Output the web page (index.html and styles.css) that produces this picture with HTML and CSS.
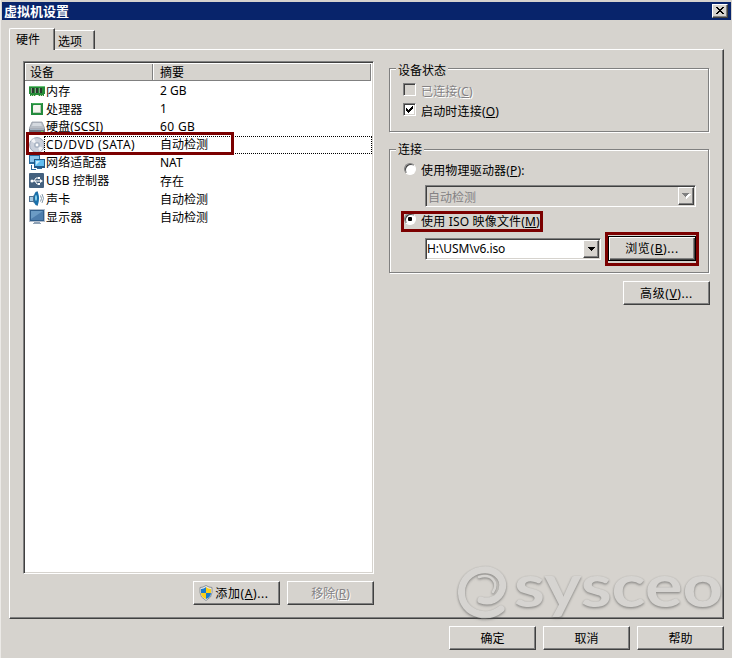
FILE: index.html
```html
<!DOCTYPE html>
<html lang="zh-CN">
<head>
<meta charset="utf-8">
<title>虚拟机设置</title>
<link rel="stylesheet" href="styles.css">
</head>
<body>
<div class="window">
  <header class="titlebar"><h1>虚拟机设置</h1>
    <button class="close" aria-label="关闭"><svg width="10" height="8" viewBox="0 0 10 8" shape-rendering="crispEdges"><path d="M1 0h2v1h1v1h2V1h1V0h2v1H8v1H7v1H6v1h1v1h1v1h1v1H7V6H6V5H4v1H3v1H1V6h1V5h1V4h1V3H3V2H2V1H1z"/></svg></button>
  </header>
  <nav class="tabs"><div class="tab active">硬件</div><div class="tab">选项</div></nav>
  <main class="panel">
    <section class="left">
      <div class="list">
        <div class="list-head"><span>设备</span><span>摘要</span></div>
        <div class="row"><svg class="icon" viewBox="0 0 16 16"><path fill="#258b38" d="M0 3h16v8h-1v2H9v-1H7v1H1v-2H0z"/><path stroke="#69c275" d="M0 3.5h16"/><path fill="#263c2b" d="M2 5h3v5H2zM6 5h3v5H6zM10 5h3v5h-3z"/><path stroke="#8a9a88" d="M2.5 5v5M6.5 5v5M10.5 5v5"/><path stroke="#c1dda8" d="M2 12.5h5M9 12.5h5" stroke-dasharray="1 1"/></svg><span class="name cn">内存</span><span>2 GB</span></div>
        <div class="row"><svg class="icon" viewBox="0 0 16 16"><path fill="#238b3e" d="M2 2h12v12H2z"/><path fill="#45ad59" d="M3 2h10v1H3z"/><rect x="4" y="4" width="8" height="8" rx="1" fill="#f3f4ee"/><path stroke="#b9cab8" d="M5 11.5h7M11.5 5v7"/></svg><span class="name cn">处理器</span><span>1</span></div>
        <div class="row"><svg class="icon" viewBox="0 0 16 16"><path fill="#b8bec6" stroke="#8b949e" stroke-width=".7" d="M3 3h10l3 7H0z"/><path fill="#d5dae0" d="M4 4h8l1 3H3z"/><path fill="#687480" d="M0 10h16v4H0z"/><path fill="#a7b4c2" d="M1 10h14v1H1z"/><path fill="#70c65c" d="M12 12h2v1h-2z"/></svg><span class="name">硬盘(SCSI)</span><span class="spaced">60 GB</span></div>
        <div class="row selected"><svg class="icon" viewBox="0 0 16 16"><circle cx="8" cy="8" r="7.4" fill="#cbd1dc" stroke="#9ba7b8"/><path fill="#f2f3f6" d="M8 8 2 4l3-3zM8 8l6 3-3 4z"/><circle cx="8" cy="8" r="3" fill="#aab5c5"/><circle cx="8" cy="8" r="1.4" fill="#fff"/></svg><span class="name wide">CD/DVD (SATA)</span><span>自动检测</span></div>
        <div class="row"><svg class="icon" viewBox="0 0 16 16"><path fill="#266b9f" d="M0 0h11v9H0z"/><path fill="#8bc5eb" d="M1 1h9v6H1z"/><path fill="#225987" d="M5 4h11v9H5z"/><path fill="#61bdf0" d="M6 5h9v6H6z"/><path fill="#c5edff" d="M7 6h4L7 10z"/><path fill="#286b9e" d="M8 13h5v1H8zM2 10h1v4h4v1H2z"/></svg><span class="name">网络适配器</span><span>NAT</span></div>
        <div class="row"><svg class="icon" viewBox="0 0 16 16"><rect x="0" y="0" width="15" height="15" rx="1" fill="#44617f"/><path d="M2 8h10M5 8l2-3h3M6 8l2 3h2" fill="none" stroke="#fff"/><circle cx="3" cy="8" r="1.5" fill="#fff"/><path fill="#fff" d="M11 6l3 2-3 2zM9 4h2v2H9zM9 10h2v2H9z"/></svg><span class="name">USB 控制器</span><span class="cn">存在</span></div>
        <div class="row"><svg class="icon" viewBox="0 0 16 16"><path fill="#4e7192" d="M0 5h4l5-5v15l-5-4H0z"/><path fill="#a5cae3" d="M1 6h3v4H1z"/><ellipse cx="7.5" cy="7.5" rx="2.5" ry="7" fill="#1870ab"/><ellipse cx="7" cy="7" rx="1" ry="3" fill="#8ed5ef"/><path d="M11.500 4.500q2 3 0 6M13 3q3 4 0 9" fill="none" stroke="#8398aa"/></svg><span class="name cn">声卡</span><span class="cn">自动检测</span></div>
        <div class="row"><svg class="icon" viewBox="0 0 16 16"><path fill="#b2becd" d="M0 0h16v13H0z"/><path fill="#315f8c" d="M1 1h14v11H1z"/><path fill="#4d7dac" d="M2 2h12v9H2z"/><path fill="#6b9bc4" d="M2 2h12L2 10z"/><path fill="#8fa2b6" d="M5 13h6v1h1v1H4v-1h1z"/></svg><span class="name cn">显示器</span><span class="cn">自动检测</span></div>
        <div class="mark mark-device"></div>
      </div>
      <div class="list-actions">
        <button class="btn spaced add"><svg class="shield" width="14" height="16" viewBox="0 0 14 16"><path d="M7 .5q3 2 6 2v5q0 5-6 8-6-3-6-8v-5q3 0 6-2z" fill="#eee" stroke="#8c9297"/><path fill="#197bcb" d="M7 2v6H2V4q3 0 5-2zm0 6h5q0 4-5 6z"/><path fill="#f9cf18" d="M7 2q2 2 5 2v4H7zM2 8h5v6Q2 12 2 8z"/></svg>添加(<u>A</u>)...</button>
        <button class="btn disabled">移除(<u>R</u>)</button>
      </div>
    </section>
    <section class="right">
      <fieldset class="group status"><div class="legend">设备状态</div>
        <div class="option disabled"><i class="check off"></i><span>已连接(<u>C</u>)</span></div>
        <div class="option"><i class="check"><svg width="7" height="7" viewBox="0 0 7 7" shape-rendering="crispEdges"><path d="M0 2h1v1h1v1h1V3h1V2h1V1h1V0h1v3H6v1H5v1H4v1H3v1H2V6H1V5H0z"/></svg></i><span>启动时连接(<u>O</u>)</span></div>
      </fieldset>
      <fieldset class="group connection"><div class="legend">连接</div>
        <div class="option physical"><i class="radio"></i><span>使用物理驱动器(<u>P</u>):</span></div>
        <div class="combo inactive"><span>自动检测</span><i class="arrow"><svg width="9" height="6" viewBox="0 0 9 6" shape-rendering="crispEdges"><path fill="#fff" d="M1 1h8v1H8v1H7v1H6v1H5v1H4V5z"/><path fill="#808080" d="M0 0h7v1H6v1H5v1H4v1H3V3H2V2H1V1H0z"/></svg></i></div>
        <div class="option iso"><i class="radio on"></i><span>使用 ISO 映像文件(<u>M</u>)</span><div class="mark mark-iso"></div></div>
        <div class="file"><div class="combo path"><span>H:\USM\v6.iso</span><i class="arrow"><svg width="7" height="4" viewBox="0 0 7 4" shape-rendering="crispEdges"><path d="M0 0h7v1H6v1H5v1H4v1H3V3H2V2H1V1H0z"/></svg></i></div>
        <div class="browse"><button class="btn default spaced">浏览(<u>B</u>)...</button></div></div>
      </fieldset>
      <button class="btn advanced spaced">高级(<u>V</u>)...</button>
    </section>
  </main>
  <footer><button class="btn">确定</button><button class="btn">取消</button><button class="btn">帮助</button></footer>
  <svg class="watermark" width="284" height="70" viewBox="0 0 284 70">
    <g class="swirl"><path d="M52 50Q42 58 30 55C8 50 6 20 28 12C44 7 57 18 53 31C50 40 41 44 32 41"/><path class="fine" d="M30 18C43 14 50 24 44 33"/></g>
    <text x="65" y="48" textLength="209" lengthAdjust="spacingAndGlyphs">sysceo</text>
  </svg>
</div>
</body>
</html>
```
FILE: styles.css
```css
* { box-sizing: border-box; }
body { margin: 0; background: #d6d3ce; color: #000; font: 12px/18px "Noto Sans", "Noto Sans CJK SC", sans-serif; }
i { font-style: normal; }
u { text-underline-offset: 1px; text-decoration-thickness: 1px; text-decoration-skip-ink: none; }
.window { position: relative; width: 732px; height: 658px; padding: 2px 1px 0 2px; border-left: 1px solid #eceae7; overflow: hidden; background: #d6d3ce; }
.titlebar { height: 18px; margin-left: -1px; background: #08246b; display: flex; align-items: center; justify-content: space-between; padding: 0 3px 0 2px; }
.titlebar h1 { margin: 0; color: #fff; font: bold 13px/18px "Noto Sans CJK SC", sans-serif; }
.close { width: 16px; height: 14px; padding: 0; display: grid; place-items: center; background: #d6d3ce; border: 1px solid; border-color: #fff #404040 #404040 #fff; box-shadow: inset -1px -1px #808080; }
.tabs { display: flex; align-items: flex-end; height: 29px; padding-left: 6px; }
.tab { width: 40px; height: 19px; padding: 2px 0 0 3px; border-top: 1px solid #fff; border-right: 1px solid #404040; box-shadow: inset -1px 0 #808080; }
.tab.active { position: relative; z-index: 1; width: 46px; height: 22px; margin-bottom: -1px; padding: 2px 0 0 6px; border-left: 1px solid #fff; border-radius: 2px 0 0 0; background: #d6d3ce; }
.panel { display: flex; gap: 15px; width: 715px; height: 570px; margin-left: 6px; padding: 11px 0 0 13px; border: 1px solid; border-color: #fff #404040 #404040 #fff; box-shadow: inset -1px -1px #808080; }
.left { width: 351px; }
.list { position: relative; height: 513px; padding: 1px; background: #fff; border: 1px solid; border-color: #808080 #fff #fff #808080; box-shadow: inset 1px 1px #404040, inset -1px -1px #d6d3ce; }
.list-head { display: grid; grid-template-columns: 128px 218px; grid-template-rows: 16px; width: 346px; height: 18px; background: #d6d3ce; border-top: 1px solid #fff; border-bottom: 1px solid #808080; }
.list-head span { padding-left: 5px; line-height: 18px; border-right: 1px solid #808080; box-shadow: inset 1px 0 #fff; }
.list-head span + span { padding-left: 7px; }
.row { display: grid; grid-template-columns: 17px 114px auto; height: 18px; padding-left: 4px; line-height: 18px; white-space: nowrap; align-items: center; }
.row:nth-child(2) { margin-top: 1px; }
.cn { margin-top: 1px; margin-bottom: -1px; }
.spaced { letter-spacing: .35px; }
.name { letter-spacing: .15px; }
.name.wide { letter-spacing: .5px; }
.row.selected { position: relative; }
.row.selected::after { content: ""; position: absolute; inset: 0 0 0 19px; border: 1px dotted #000; }
.icon { width: 16px; height: 16px; }
.mark { position: absolute; border: 3px solid #7b0000; }
.mark-device { left: 2px; top: 70px; width: 208px; height: 23px; }
.list-actions { display: flex; justify-content: flex-end; gap: 7px; margin-top: 7px; }
.btn { display: flex; align-items: center; justify-content: center; width: 87px; height: 24px; padding: 1px 0 0; color: #000; font: inherit; background: #d6d3ce; border: 1px solid; border-color: #fff #404040 #404040 #fff; box-shadow: inset -1px -1px #808080; white-space: nowrap; }
.btn.add { padding-right: 5px; }
.btn.add, .btn.default, .btn.advanced { letter-spacing: .6px; }
.shield { margin: 0 2px 1px 0; }
.disabled, .btn.disabled { color: #848284; text-shadow: 1px 1px #fff; }
.right { width: 320px; }
.group { position: relative; width: 320px; margin: 7px 0 0; padding: 0; border: 1px solid #808080; box-shadow: 1px 1px #fff, inset 1px 1px #fff; }
.status { height: 64px; padding-top: 12px; }
.connection { height: 124px; margin-top: 17px; padding-top: 11px; }
.legend { position: absolute; top: -7px; left: 6px; padding: 0 2px; background: #d6d3ce; line-height: 18px; }
.connection .legend { top: -9px; }
.option { display: flex; align-items: center; height: 20px; padding-left: 13px; white-space: nowrap; letter-spacing: .18px; }
.option span { margin: 1px 0 -1px 5px; }
.option.physical span { margin-top: -1px; }
.check { display: grid; place-items: center; width: 13px; height: 13px; background: #fff; border: 1px solid; border-color: #808080 #fff #fff #808080; box-shadow: inset 1px 1px #404040, inset -1px -1px #d6d3ce; margin-bottom: 3px; }
.check.off { background: #d6d3ce; }
.radio { position: relative; width: 12px; height: 12px; margin: 0 0 4px 1px; border-radius: 50%; background: #fff; border: 1px solid; border-color: #808080 #fff #fff #808080; box-shadow: inset 1px 1px #404040; }
.radio.on::after { content: ""; position: absolute; left: 3px; top: 3px; width: 4px; height: 4px; border-radius: 1px; background: #000; }
.combo { display: flex; align-items: center; justify-content: space-between; width: 176px; height: 22px; padding: 0 1px 0 2px; background: #fff; border: 1px solid; border-color: #808080 #fff #fff #808080; box-shadow: inset 1px 1px #404040, inset -1px -1px #d6d3ce; }
.combo.inactive { width: 271px; margin: 4px 0 4px 35px; background: #d6d3ce; color: #848284; }
.combo.inactive span { margin: 2px 0 -1px; }
.combo.path { letter-spacing: -.1px; padding-left: 1px; }
.arrow { display: grid; place-items: center; width: 16px; height: 18px; background: #d6d3ce; border: 1px solid; border-color: #fff #404040 #404040 #fff; box-shadow: inset -1px -1px #808080; }
.iso { position: relative; }
.mark-iso { left: 11px; top: 0; width: 142px; height: 21px; }
.file { display: flex; height: 34px; padding-left: 35px; gap: 4px; margin-top: 1px; }
.file .combo { margin-top: 6px; }
.browse { width: 94px; height: 34px; border: 3px solid #7b0000; padding: 1px 0; }
.btn.default { width: 88px; height: 25px; border-color: #000; box-shadow: inset 1px 1px #fff, inset -1px -1px #404040, inset -2px -2px #808080; }
.advanced { margin: 8px 0 0 234px; }
footer { display: flex; justify-content: flex-end; gap: 7px; margin-top: 7px; padding-right: 7px; }
.watermark { position: absolute; left: 448px; top: 559px; overflow: visible; pointer-events: none; filter: drop-shadow(0 1px 1px rgba(70,70,70,.55)) drop-shadow(0 1px 1px rgba(90,90,90,.3)); opacity: .8; }
.swirl { fill: none; stroke: #d6d5d2; stroke-width: 7; stroke-linecap: round; }
.swirl .fine { stroke-width: 2.5; }
.watermark text { font: bold 60px "Lato", sans-serif; fill: #d6d5d2; }
```
